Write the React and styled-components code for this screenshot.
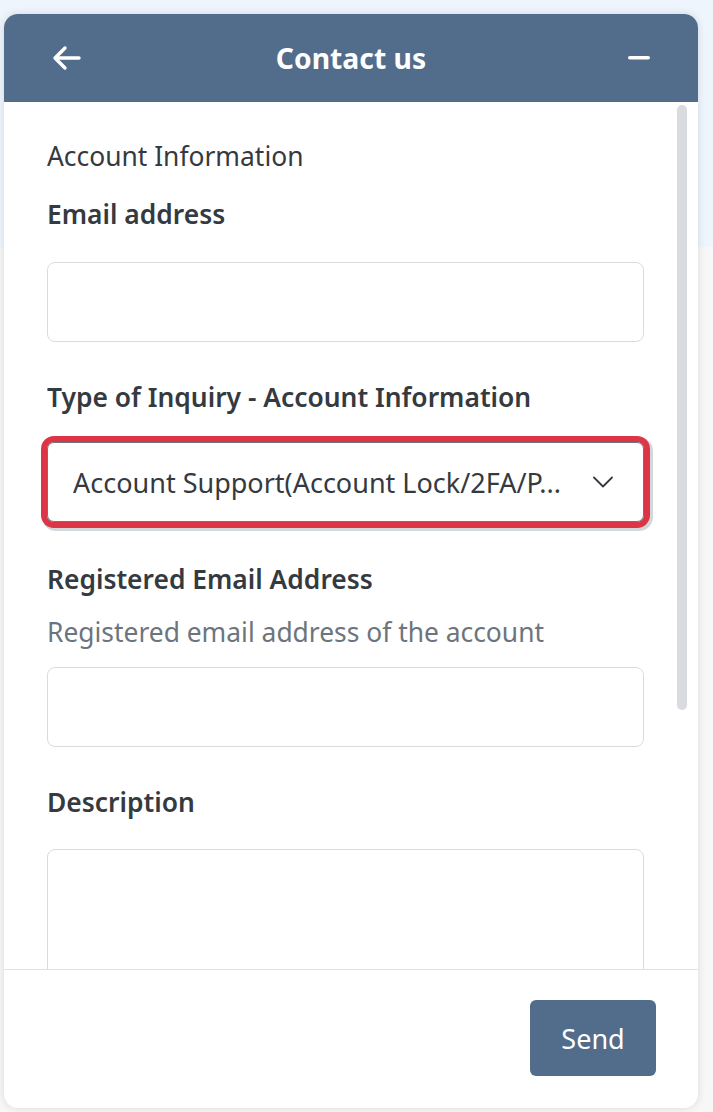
import React from 'react'
import styled, { createGlobalStyle } from 'styled-components'

const GlobalStyle = createGlobalStyle`
  html, body {
    margin: 0;
    padding: 0;
  }
  body {
    font-family: "Noto Sans", "Open Sans", sans-serif;
    background: linear-gradient(to bottom, #eef5fd 0, #eef5fd 247px, #f7f7f7 247px, #f7f7f7 100%);
    min-height: 1112px;
  }
`

const Page = styled.div`
  padding: 14px 15px 4px 4px;
  height: 1112px;
  box-sizing: border-box;
`

const Widget = styled.div`
  height: 1094px;
  display: flex;
  flex-direction: column;
  background: #fff;
  border-radius: 14px;
  box-shadow: 0 0 8px rgba(0, 0, 0, 0.12);
  overflow: hidden;
`

const Header = styled.div`
  height: 88px;
  flex-shrink: 0;
  background: #526d8b;
  display: grid;
  grid-template-columns: 90px 1fr 90px;
  align-items: center;
  color: #fff;
`

const Title = styled.div`
  text-align: center;
  font-size: 28.3px;
  font-weight: 700;
`

const HeadIcon = styled.div`
  display: flex;
  justify-content: ${(p) => (p.$right ? 'flex-end' : 'flex-start')};
  padding: ${(p) => (p.$right ? '0 48px 0 0' : '0 0 0 48px')};
  svg {
    display: block;
  }
`

const Body = styled.div`
  position: relative;
  flex: 1;
  overflow: hidden;
  padding: 36px 54px 0 43px;
`

const Thumb = styled.div`
  position: absolute;
  top: 3px;
  right: 11px;
  width: 10px;
  height: 605px;
  border-radius: 5px;
  background: #d8dbdf;
`

const SectionTitle = styled.div`
  font-size: 26.4px;
  line-height: 36px;
  color: #343a40;
  margin-bottom: 22px;
`

const Field = styled.div`
  margin-bottom: ${(p) => p.$gap || 37}px;
`

const Label = styled.div`
  font-size: 26.4px;
  line-height: 36px;
  font-weight: 600;
  color: #343a40;
  margin-bottom: ${(p) => p.$gap || 28}px;
`

const Help = styled.div`
  font-size: 26.4px;
  line-height: 36px;
  color: #6c757d;
  margin: -11px 0 17px;
`

const Input = styled.div`
  height: ${(p) => p.$h || 80}px;
  box-sizing: border-box;
  border: 1px solid #d9dcdf;
  border-radius: 8px;
  background: #fff;
`

const Select = styled.div`
  height: 80px;
  box-sizing: border-box;
  border: 1px solid #6b7480;
  border-radius: 7px;
  box-shadow: 0 0 0 6px #dc3545, 2px 2px 0 7px #d4d7da;
  display: flex;
  align-items: center;
  padding: 0 30px 0 25px;
  font-size: 27px;
  color: #343a40;
  gap: 12px;
`

const SelectText = styled.span`
  flex: 1;
  white-space: nowrap;
  overflow: hidden;
`

const Footer = styled.div`
  flex-shrink: 0;
  height: 139px;
  box-sizing: border-box;
  border-top: 1px solid #e3e3e3;
  display: flex;
  justify-content: flex-end;
  align-items: flex-start;
  padding: 30px 42px 0 0;
`

const SendButton = styled.button`
  width: 126px;
  height: 76px;
  border: none;
  border-radius: 6px;
  background: #526d8b;
  color: #fff;
  font-family: inherit;
  font-size: 27px;
  cursor: pointer;
`

const App = () => {
  return (
    <Page>
      <GlobalStyle />
      <Widget>
        <Header>
          <HeadIcon>
            <svg width="30" height="26" viewBox="0 0 30 26" fill="none" stroke="#fff" strokeWidth="3.4" strokeLinecap="round" strokeLinejoin="round">
              <path d="M27 13H4" />
              <path d="M13 3L3 13l10 10" />
            </svg>
          </HeadIcon>
          <Title>Contact us</Title>
          <HeadIcon $right>
            <svg width="22" height="6" viewBox="0 0 22 6">
              <rect x="0" y="1" width="22" height="3.6" rx="1.8" fill="#fff" />
            </svg>
          </HeadIcon>
        </Header>
        <Body>
          <Thumb />
          <SectionTitle>Account Information</SectionTitle>
          <Field>
            <Label $gap={30}>Email address</Label>
            <Input />
          </Field>
          <Field $gap={39}>
            <Label $gap={27}>Type of Inquiry - Account Information</Label>
            <Select>
              <SelectText>Account Support(Account Lock/2FA/P...</SelectText>
              <svg width="20" height="12" viewBox="0 0 20 12" fill="none" stroke="#343a40" strokeWidth="1.8" strokeLinecap="round" strokeLinejoin="round">
                <path d="M1 1.5l9 9 9-9" />
              </svg>
            </Select>
          </Field>
          <Field>
            <Label>Registered Email Address</Label>
            <Help>Registered email address of the account</Help>
            <Input />
          </Field>
          <Field>
            <Label $gap={29}>Description</Label>
            <Input $h={200} />
          </Field>
        </Body>
        <Footer>
          <SendButton>Send</SendButton>
        </Footer>
      </Widget>
    </Page>
  )
}

export default App
